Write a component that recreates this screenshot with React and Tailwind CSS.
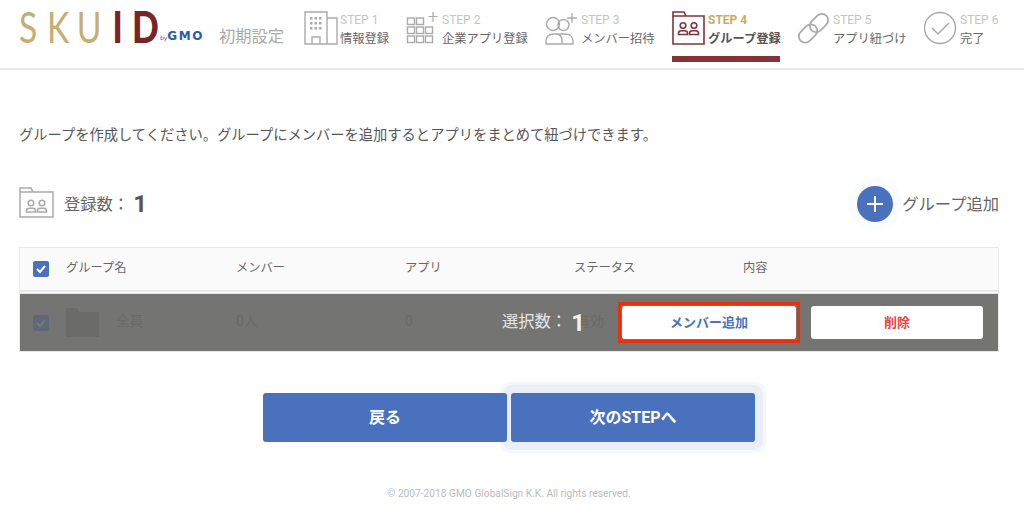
import React from 'react';

const font = { fontFamily: 'Roboto, "Noto Sans CJK JP", sans-serif' };

function GroupPeople({ color }) {
  return (
    <g fill="none" stroke={color} strokeWidth="1.6">
      <circle cx="11" cy="14.5" r="2.8" />
      <path d="M6.5 23.5v-1.2c0-1.6 1.2-2.6 2.8-2.6h3.4c1.6 0 2.8 1 2.8 2.6v1.2z" />
      <circle cx="22" cy="14.5" r="2.8" />
      <path d="M17.5 23.5v-1.2c0-1.6 1.2-2.6 2.8-2.6h3.4c1.6 0 2.8 1 2.8 2.6v1.2z" />
    </g>
  );
}

function Step({ icon, step, label, active, className }) {
  return (
    <div className={`flex h-[62px] items-start pt-[11px] ${className}`}>
      {icon}
      <div className="flex flex-col pt-[1px]">
        <span className={`text-[12px] leading-[16px] ${active ? 'font-bold text-[#c9ab62]' : 'text-[#c4c4c4]'}`}>{step}</span>
        <span className={`mt-[3px] text-[12.25px] leading-[17px] whitespace-nowrap ${active ? 'font-bold text-[#555]' : 'text-[#666]'}`}>{label}</span>
      </div>
    </div>
  );
}

function Logo() {
  return (
    <div className="flex h-[62px] w-[185px] items-end pb-[14px]">
      <div className="w-[141px]">
        <div className="flex w-max origin-left scale-x-[0.78] text-[43px] leading-[43px]" style={{ fontFamily: 'Lato' }}>
          <span className="w-[36px] text-[#c6ad72]">S</span>
          <span className="w-[38px] text-[#c6ad72]">K</span>
          <span className="w-[46px] text-[#c6ad72]">U</span>
          <span className="w-[25px] font-black text-[#7b2329]">I</span>
          <span className="origin-left scale-x-[1.05] font-black text-[#7b2329]">D</span>
        </div>
      </div>
      <span className="mb-[3px] flex items-baseline text-[#2a5cab]" style={{ fontFamily: '"DejaVu Sans"' }}>
        <span className="text-[6px]">by</span>
        <span className="text-[12px] font-bold tracking-[1.5px]">GMO</span>
      </span>
    </div>
  );
}

function Header() {
  return (
    <header className="flex h-[70px] items-start border-b-2 border-[#e9e9e9] pl-[19px]">
      <Logo />
      <div className="ml-[15px] w-[85px] pt-[27px] text-[16.3px] leading-[20px] text-[#aaa]">初期設定</div>

      <Step className="w-[102px]" step="STEP 1" label="情報登録" icon={
        <svg width="36" height="34" viewBox="0 0 36 34" className="shrink-0" fill="none" stroke="#aaa" strokeWidth="1.4">
          <path d="M1 33V1h22v32zM23 7h10v26H23M8 33v-7h8v7" />
          <g fill="#aaa" stroke="none">
            <rect x="6" y="6" width="2.5" height="2.5" /><rect x="10.5" y="6" width="2.5" height="2.5" /><rect x="15" y="6" width="2.5" height="2.5" />
            <rect x="6" y="11" width="2.5" height="2.5" /><rect x="10.5" y="11" width="2.5" height="2.5" /><rect x="15" y="11" width="2.5" height="2.5" />
            <rect x="6" y="16" width="2.5" height="2.5" /><rect x="10.5" y="16" width="2.5" height="2.5" /><rect x="15" y="16" width="2.5" height="2.5" />
          </g>
        </svg>
      } />
      <Step className="w-[139px]" step="STEP 2" label="企業アプリ登録" icon={
        <svg width="36" height="34" viewBox="0 0 36 34" className="shrink-0" fill="none" stroke="#aaa" strokeWidth="1.4">
          <rect x="1.500" y="7" width="7" height="6.500" /><rect x="10.500" y="7" width="7" height="6.500" />
          <rect x="1.500" y="16" width="7" height="6.500" /><rect x="10.500" y="16" width="7" height="6.500" /><rect x="19.500" y="16" width="7" height="6.500" />
          <rect x="1.500" y="25" width="7" height="6.500" /><rect x="10.500" y="25" width="7" height="6.500" /><rect x="19.500" y="25" width="7" height="6.500" />
          <path d="M27 1v10M22.500 5.500h9" strokeWidth="1.2" />
        </svg>
      } />
      <Step className="w-[127px]" step="STEP 3" label="メンバー招待" icon={
        <svg width="36" height="34" viewBox="0 0 36 34" className="shrink-0" fill="none" stroke="#aaa" strokeWidth="1.4">
          <circle cx="8" cy="13" r="6.500" />
          <circle cx="18.500" cy="14" r="5.500" />
          <path d="M1 33v-3c0-4 3-7 7-7h3c4 0 6 3 6 7v3zM11 23h9c5 0 8 3 8 7v3H17" />
          <path d="M27 2v10M22 7h10" strokeWidth="1.3" />
        </svg>
      } />
      <Step className="mr-[17px] w-[108px] border-b-[6px] border-[#85323a]" active step="STEP 4" label="グループ登録" icon={
        <svg width="36" height="34" viewBox="0 0 36 34" className="shrink-0" fill="none" stroke="#85323a" strokeWidth="1.6">
          <path d="M1 33V1h11l2 4h18v28zM1 5h13" />
          <GroupPeople color="#85323a" />
        </svg>
      } />
      <Step className="w-[127px]" step="STEP 5" label="アプリ紐づけ" icon={
        <svg width="36" height="34" viewBox="0 0 36 34" className="shrink-0" fill="none" stroke="#aaa" strokeWidth="1.5">
          <rect x="-9" y="-5.500" width="18" height="11" rx="5.500" transform="translate(11 22.500) rotate(-45) scale(1.15)" />
          <rect x="-9" y="-5.500" width="18" height="11" rx="5.500" transform="translate(22 12) rotate(-45) scale(1.15)" />
        </svg>
      } />
      <Step className="" step="STEP 6" label="完了" icon={
        <svg width="36" height="34" viewBox="0 0 36 34" className="shrink-0" fill="none" stroke="#aaa" strokeWidth="1.5">
          <circle cx="16" cy="17" r="15.500" />
          <path d="M8 17l6 6 11-11" />
        </svg>
      } />
    </header>
  );
}

function Checkbox({ className }) {
  return (
    <span className={`flex h-[16px] w-[16px] items-center justify-center rounded-[2px] bg-[#4a71bd] ${className || ''}`}>
      <svg width="12" height="12" viewBox="0 0 12 12" fill="none" stroke="#fff" strokeWidth="2"><path d="M2 6l3 3 5-6" /></svg>
    </span>
  );
}

function Table() {
  return (
    <div className="mt-[22px] border border-[#e8e8e8]">
      <div className="grid h-[44px] grid-cols-[46px_170px_169px_169px_169px_1fr] items-center border-b-2 border-[#e8e8e8] bg-[#fafafa] text-[12.25px] text-[#666]">
        <Checkbox className="ml-[13px]" />
        <span className="mb-[1px]">グループ名</span>
        <span className="mb-[1px]">メンバー</span>
        <span className="mb-[1px]">アプリ</span>
        <span className="mb-[1px]">ステータス</span>
        <span className="mb-[1px]">内容</span>
      </div>
      <div className="h-[1px] bg-white" />
      <div className="relative h-[58px] border-t border-[#e8dfca] bg-[#747472]">
        <div className="grid h-full grid-cols-[46px_170px_169px_169px_169px_1fr] items-center text-[14px] text-[#6a6a68]">
          <span className="ml-[13px] flex h-[16px] w-[16px] items-center justify-center rounded-[2px] bg-[#5f6779]">
            <svg width="12" height="12" viewBox="0 0 12 12" fill="none" stroke="#777" strokeWidth="2"><path d="M2 6l3 3 5-6" /></svg>
          </span>
          <div className="flex items-center">
            <svg width="33" height="29" viewBox="0 0 33 29" fill="#6b6b69"><path d="M0 29V0h11l2 4h20v25z" /></svg>
            <span className="mb-[2px] ml-[17px] text-[13.5px]">全員</span>
          </div>
          <span className="mb-[2px]">0人</span>
          <span className="mb-[2px]">0</span>
          <span className="mb-[2px] ml-[2px]">有効</span>
        </div>
        {/* 選択時のバー */}
        <div className="absolute inset-0 flex items-center">
          <span className="ml-[482px] text-[16.3px] text-[#e6e6e6]">選択数：</span>
          <span className="ml-[4px] text-[24px] font-bold text-[#f2f2f2]">1</span>
          <div className="ml-[33px] rounded-[1px] border-[3px] border-[#e8300f] p-[1px]">
            <button className="block h-[33px] w-[174px] rounded-[3px] bg-white text-[13px] font-bold text-[#4a71bd]">メンバー追加</button>
          </div>
          <button className="ml-[11px] h-[33px] w-[172px] rounded-[3px] bg-white text-[13px] font-bold text-[#e8453c]">削除</button>
        </div>
      </div>
    </div>
  );
}

export default function App() {
  return (
    <div className="h-[513px] w-[1024px] overflow-hidden bg-white" style={font}>
      <Header />
      <main className="px-[19px] pr-[25px]">
        <p className="mt-[55px] text-[14.27px] leading-[20px] text-[#555]">グループを作成してください。グループにメンバーを追加するとアプリをまとめて紐づけできます。</p>
        <div className="mt-[38px] flex h-[42px] items-center justify-between">
          <div className="flex items-center">
            <svg width="35" height="31" viewBox="0 0 35 31" fill="none" stroke="#aaa" strokeWidth="1.5" className="mb-[4px]">
              <path d="M1 30V1h11l2 4h20v25zM1 5h13" />
              <g transform="translate(1 1.500)"><GroupPeople color="#aaa" /></g>
            </svg>
            <span className="ml-[10px] mt-[2px] text-[16.3px] text-[#666]">登録数：</span>
            <span className="ml-[4px] text-[24px] leading-[24px] font-bold text-[#555]">1</span>
          </div>
          <div className="flex items-center">
            <span className="flex h-[36px] w-[36px] items-center justify-center rounded-full bg-[#4a71bd] shadow-[0_0_0_9px_#fafcfd]">
              <svg width="18" height="18" viewBox="0 0 18 18" stroke="#fff" strokeWidth="2"><path d="M9 1v16M1 9h16" /></svg>
            </span>
            <span className="ml-[9px] mt-[2px] text-[16.3px] text-[#666]">グループ追加</span>
          </div>
        </div>
        <Table />
        <div className="mt-[41px] flex justify-center gap-[4px]">
          <button className="relative z-10 h-[49px] w-[244px] rounded-[3px] bg-[#4a71bd] text-[16px] font-bold text-white">戻る</button>
          <button className="h-[49px] w-[244px] rounded-[3px] bg-[#4a71bd] text-[16px] font-bold text-white shadow-[0_0_0_8px_#e9eef7,0_0_0_11px_#f5f7fb]">次のSTEPへ</button>
        </div>
        <p className="mt-[45px] text-center text-[10.2px] leading-[14px] text-[#bbb]">© 2007-2018 GMO GlobalSign K.K. All rights reserved.</p>
      </main>
    </div>
  );
}
